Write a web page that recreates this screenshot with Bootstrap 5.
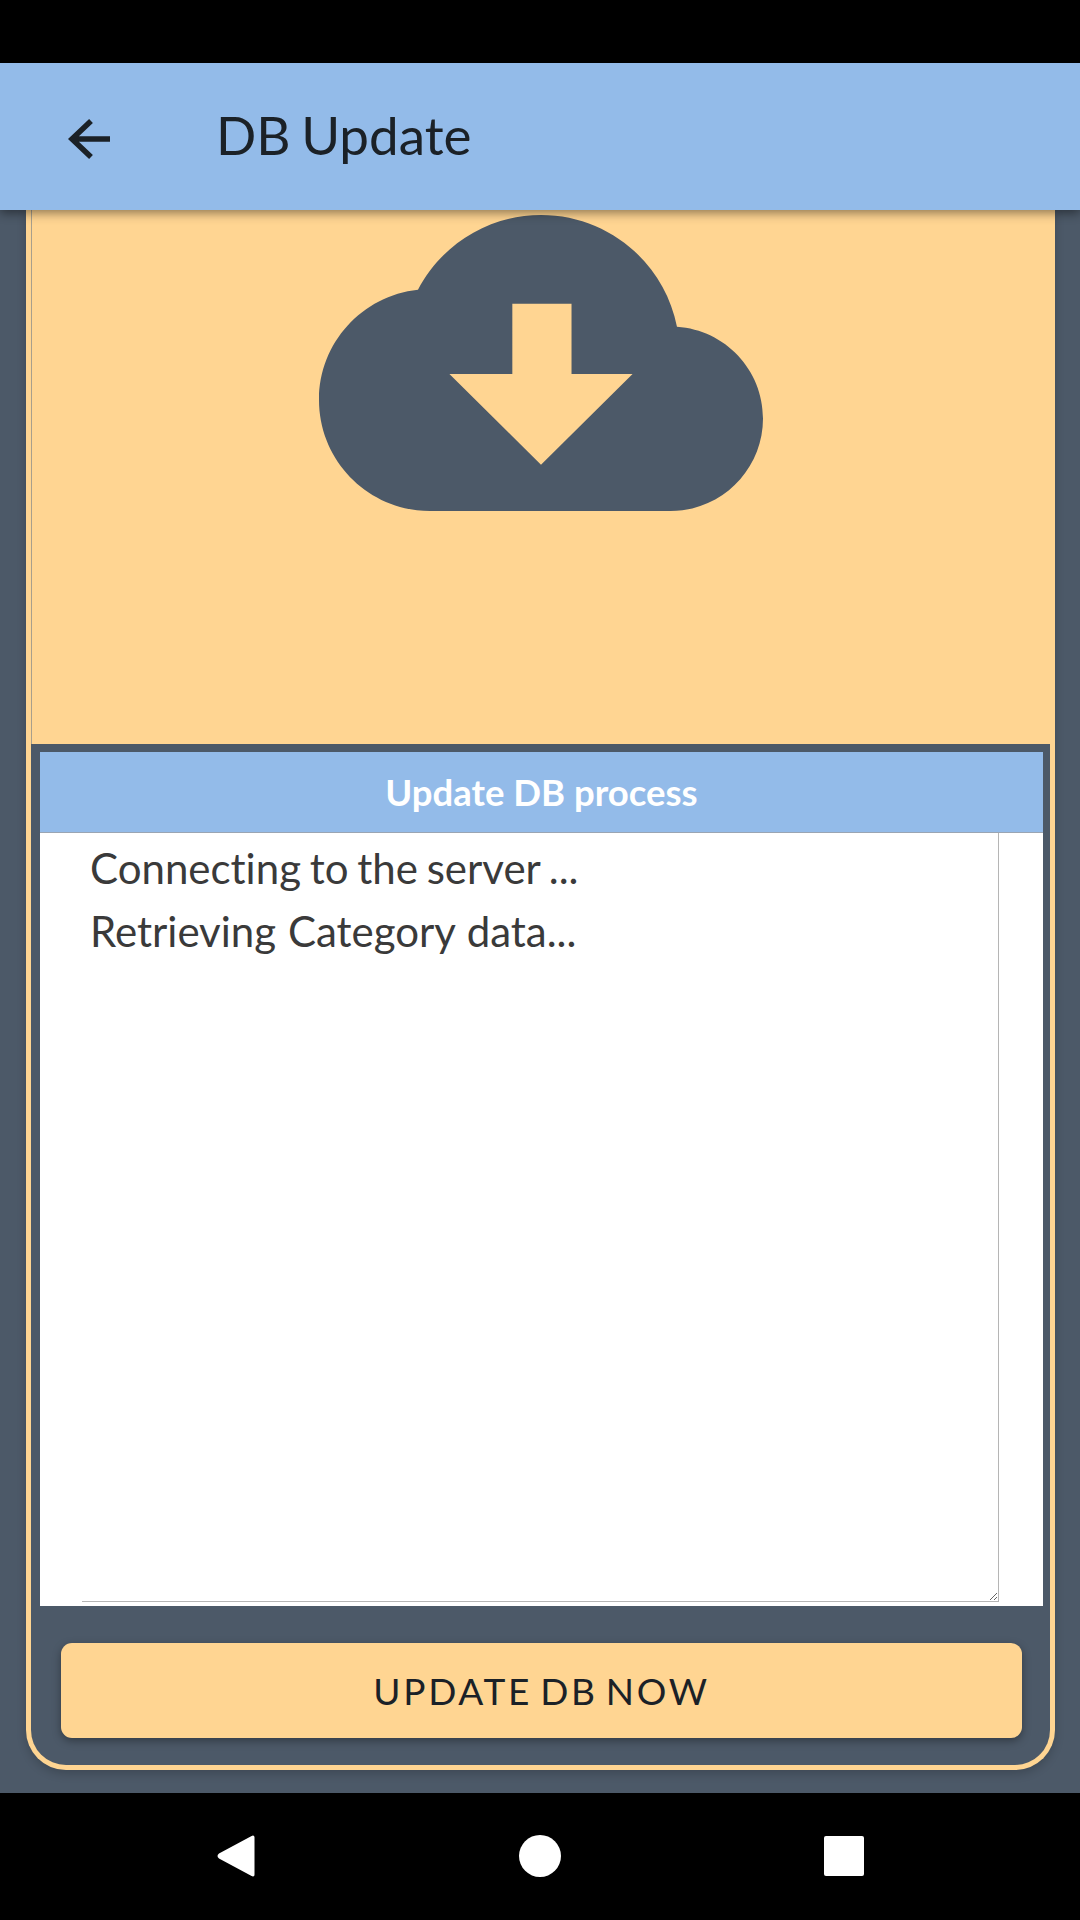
<!doctype html>
<html lang="en">

<head>
  <meta charset="utf-8">
  <meta name="viewport" content="width=device-width, initial-scale=1">
  <title>DB Update</title>
  <link href="https://cdn.jsdelivr.net/npm/bootstrap@5.3.3/dist/css/bootstrap.min.css" rel="stylesheet">
  <style>
    body {
      font-family: Lato, "Open Sans", sans-serif;
      font-variant-ligatures: none;
      background-color: #4c5968;
      height: 1920px;
      overflow: hidden;
    }

    .status-strip {
      height: 63px;
      background-color: #000;
    }

    .app-head {
      height: 147px;
      background-color: #93bbe9;
      box-shadow: 0 3px 10px rgba(0, 0, 0, 0.45);
      z-index: 5;
      color: #1b2127;
    }

    .back-arrow {
      width: 44px;
      height: 42px;
      margin-left: 67px;
      margin-top: 5px;
    }

    .app-title {
      font-size: 53px;
      font-weight: 400;
      word-spacing: -3px;
      margin: 0 0 3px 105px;
    }

    .page-main {
      padding: 0 25px 23px 26px;
    }

    .outer-frame {
      border: 5px solid #ffd592;
      border-top: 0;
      border-radius: 0 0 40px 40px;
      box-shadow: 0 4px 10px rgba(0, 0, 0, 0.18);
    }

    .cloud-panel {
      height: 534px;
      background-color: #ffd592;
      box-shadow: inset 1px 0 0 #a89f8c;
      margin-right: -1px;
      padding-top: 5px;
    }

    .cloud-icon {
      width: 444px;
      height: 296px;
      fill: #4c5968;
    }

    .log-frame {
      padding: 8px 7px 0 9px;
    }

    .log-head {
      height: 81px;
      background-color: #93bbe9;
      color: #fff;
      font-size: 36.500px;
      font-weight: 700;
      border-bottom: 1px solid #9aa5b3;
    }

    .log-body {
      height: 773px;
      background-color: #fff;
      padding: 0 44px 4px 42px;
    }

    .log-text {
      height: 769px;
      padding: 4px 8px;
      border-right: 1px solid #b5b5b5;
      border-bottom: 1px solid #b5b5b5;
      font-size: 42px;
      line-height: 63px;
      word-spacing: -2px;
      color: #3a3a3a;
      overflow: auto;
      resize: both;
    }

    .log-text .line-wide {
      word-spacing: 1px;
    }

    .update-btn {
      height: 95px;
      margin: 37px 28px 27px 30px;
      background-color: #ffd592;
      border: 0;
      border-radius: 11px;
      color: #1b2127;
      font-size: 37px;
      letter-spacing: 2.7px;
      word-spacing: -4px;
      box-shadow: 0 3px 8px rgba(0, 0, 0, 0.35);
    }

    .update-btn:hover {
      background-color: #ffd592;
    }

    .nav-strip {
      height: 127px;
      background-color: #000;
    }

    .nav-icon {
      position: absolute;
      top: 41px;
      width: 44px;
      height: 44px;
      fill: #fff;
    }

    .nav-back { left: 214px; }
    .nav-home { left: 518px; }
    .nav-recent { left: 822px; }
  </style>
</head>

<body class="d-flex flex-column">
  <div class="status-strip flex-shrink-0"></div>

  <header class="app-head position-relative d-flex align-items-center flex-shrink-0">
    <svg class="back-arrow" viewBox="0 0 44 42" aria-hidden="true">
      <path d="M43 21H6M24 3 5 21 24 39" fill="none" stroke="#1b2127" stroke-width="5.500"/>
    </svg>
    <h1 class="app-title">DB Update</h1>
  </header>

  <main class="page-main flex-grow-1 d-flex flex-column">
    <div class="outer-frame flex-grow-1 d-flex flex-column">
      <div class="cloud-panel text-center">
        <svg class="cloud-icon" viewBox="0 4 24 16" aria-hidden="true">
          <path d="M19.35 10.04C18.67 6.59 15.64 4 12 4 9.11 4 6.6 5.64 5.35 8.04 2.34 8.36 0 10.91 0 14c0 3.31 2.69 6 6 6h13c2.76 0 5-2.24 5-5 0-2.64-2.05-4.78-4.65-4.96zM16.950 12.600 12 17.500 7.050 12.600h3.400V8.800h3.200v3.800z"/>
        </svg>
      </div>
      <section class="log-frame">
        <div class="log-head d-flex align-items-center justify-content-center">Update DB process</div>
        <div class="log-body">
          <div class="log-text">
            <div>Connecting to the server ...</div>
            <div class="line-wide">Retrieving Category data...</div>
          </div>
        </div>
      </section>
      <button class="btn update-btn text-uppercase" type="button">Update DB now</button>
    </div>
  </main>

  <nav class="nav-strip position-relative flex-shrink-0">
    <svg class="nav-icon nav-back" viewBox="0 0 44 44" aria-hidden="true">
      <path d="M39 1.500c1 0 1.500 1 1.500 2V40.500c0 1-.5 2-1.500 2-.6 0-1-.2-1.400-.5L5 24.500c-2-1.300-2-3.700 0-5L37.600 2c.4-.3.800-.5 1.400-.5z"/>
    </svg>
    <svg class="nav-icon nav-home" viewBox="0 0 44 44" aria-hidden="true">
      <circle cx="22" cy="22" r="21"/>
    </svg>
    <svg class="nav-icon nav-recent" viewBox="0 0 44 44" aria-hidden="true">
      <rect x="2" y="2" width="40" height="40" rx="2"/>
    </svg>
  </nav>

  <script src="https://cdn.jsdelivr.net/npm/bootstrap@5.3.3/dist/js/bootstrap.bundle.min.js"></script>
</body>

</html>
